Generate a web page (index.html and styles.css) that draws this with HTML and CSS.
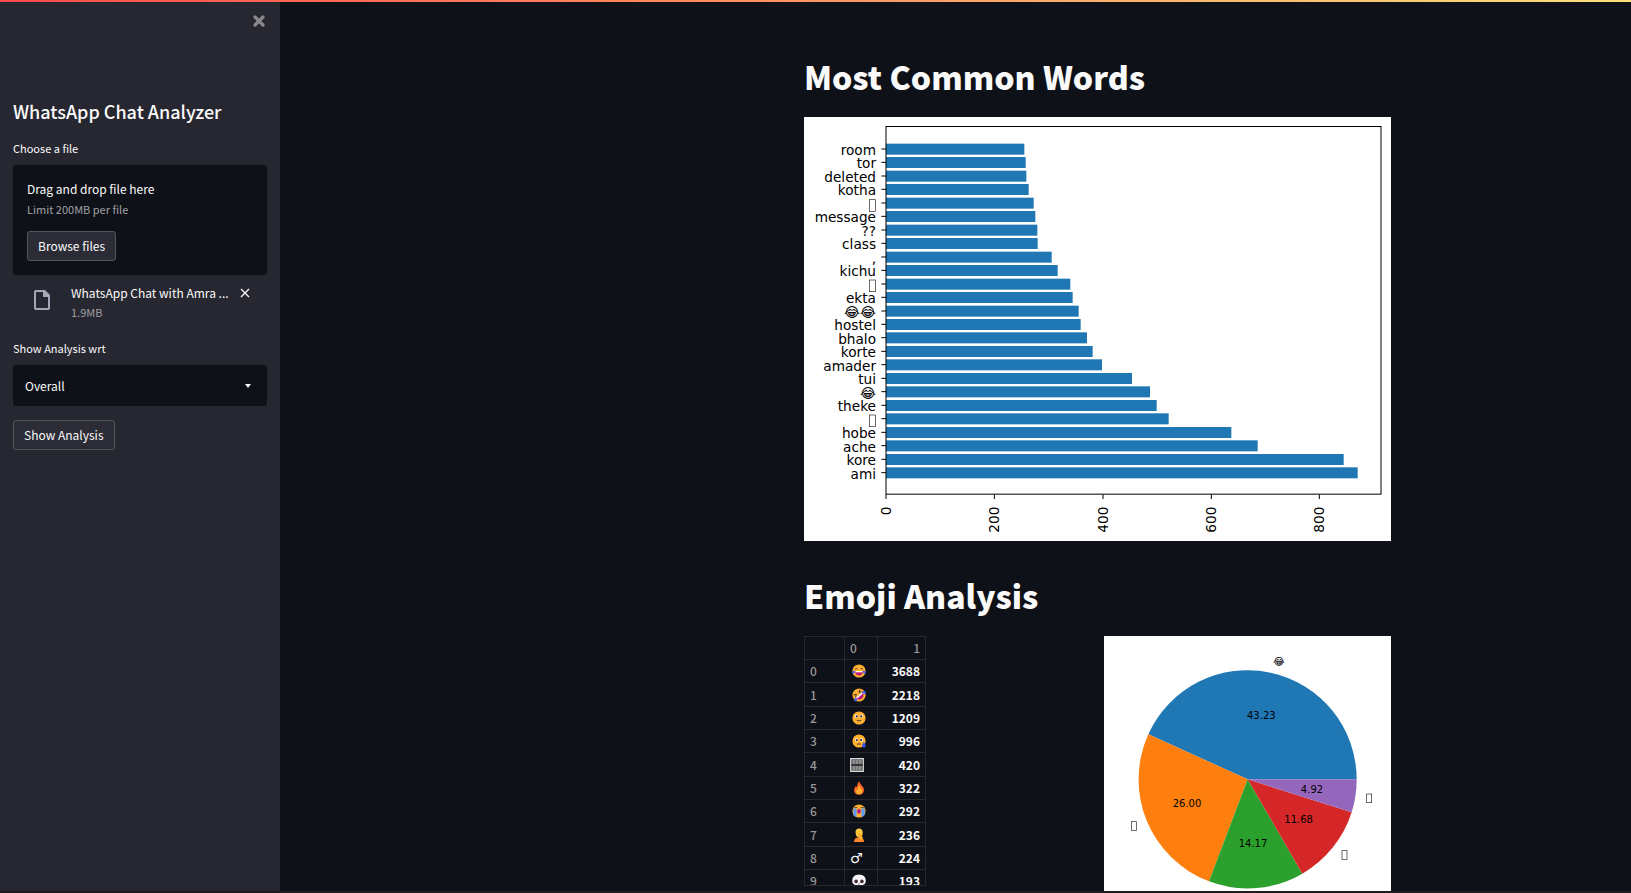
FILE: index.html
```html
<!DOCTYPE html>
<html lang="en">
<head>
<meta charset="utf-8">
<title>WhatsApp Chat Analyzer</title>
<link rel="stylesheet" href="styles.css">
</head>
<body>
<div class="app">
  <div class="decoration"></div>
  <div class="body">
    <aside class="sidebar">
      <div class="sidebar-top">
        <button class="icon-button" type="button" aria-label="Close sidebar">
          <svg width="12" height="12" viewBox="0 0 12 12"><path d="M2 2L10 10M10 2L2 10" stroke="#88888d" stroke-width="3.2" stroke-linecap="round"/></svg>
        </button>
      </div>
      <h1 class="sidebar-title">WhatsApp Chat Analyzer</h1>

      <label class="label" for="browse">Choose a file</label>
      <div class="dropzone">
        <div class="drop-title">Drag and drop file here</div>
        <div class="drop-limit">Limit 200MB per file</div>
        <button class="button" id="browse" type="button">Browse files</button>
      </div>
      <div class="file">
        <svg class="file-icon" width="16" height="20" viewBox="0 0 16 20"><path d="M1 2Q1 1 2 1H10L15 6V18Q15 19 14 19H2Q1 19 1 18Z" fill="none" stroke="#a3a8b8" stroke-width="2"/><path d="M9 0H11L16 5V7H9Z" fill="#a3a8b8"/></svg>
        <div class="file-text">
          <div class="file-name">WhatsApp Chat with Amra ...</div>
          <div class="file-size">1.9MB</div>
        </div>
        <button class="icon-button" type="button" aria-label="Remove file">
          <svg width="10" height="10" viewBox="0 0 10 10"><path d="M1 1L9 9M9 1L1 9" stroke="#fafafa" stroke-width="1.3"/></svg>
        </button>
      </div>

      <label class="label" for="user">Show Analysis wrt</label>
      <div class="select-box">
        <select class="select" id="user"><option>Overall</option></select>
        <svg class="caret" width="6" height="4" viewBox="0 0 6 4"><path d="M0 0H6L3 4Z" fill="#fafafa"/></svg>
      </div>
      <button class="button" type="button">Show Analysis</button>
    </aside>

    <main class="main">
      <div class="content">
        <h2 class="heading">Most Common Words</h2>
        <svg class="chart" viewBox="0 0 1761 1272" role="img" aria-label="Most common words">
          <rect width="1761" height="1272" fill="#fff"/>
          <g fill="#1f77b4">
            <rect x="246" y="80" width="415" height="33"/>
            <rect x="246" y="120" width="419" height="33"/>
            <rect x="246" y="161" width="421" height="33"/>
            <rect x="246" y="201" width="428" height="33"/>
            <rect x="246" y="242" width="443" height="33"/>
            <rect x="246" y="282" width="448" height="33"/>
            <rect x="246" y="323" width="454" height="33"/>
            <rect x="246" y="363" width="455" height="33"/>
            <rect x="246" y="404" width="497" height="33"/>
            <rect x="246" y="444" width="515" height="33"/>
            <rect x="246" y="485" width="553" height="33"/>
            <rect x="246" y="525" width="560" height="33"/>
            <rect x="246" y="566" width="578" height="33"/>
            <rect x="246" y="606" width="584" height="33"/>
            <rect x="246" y="646" width="603" height="33"/>
            <rect x="246" y="687" width="620" height="33"/>
            <rect x="246" y="727" width="648" height="33"/>
            <rect x="246" y="768" width="738" height="33"/>
            <rect x="246" y="808" width="792" height="33"/>
            <rect x="246" y="849" width="812" height="33"/>
            <rect x="246" y="889" width="848" height="33"/>
            <rect x="246" y="930" width="1036" height="33"/>
            <rect x="246" y="970" width="1115" height="33"/>
            <rect x="246" y="1011" width="1373" height="33"/>
            <rect x="246" y="1051" width="1415" height="33"/>
          </g>
          <g fill="none" stroke="#000" stroke-width="3">
            <rect x="246" y="28.5" width="1485" height="1103"/>
            <path d="M232 96h14M232 136h14M232 177h14M232 217h14M232 258h14M232 298h14M232 339h14M232 379h14M232 420h14M232 460h14M232 501h14M232 541h14M232 582h14M232 622h14M232 662h14M232 703h14M232 743h14M232 784h14M232 824h14M232 865h14M232 905h14M232 946h14M232 986h14M232 1027h14M232 1067h14"/>
            <path d="M246 1132v14M571 1132v14M897 1132v14M1222 1132v14M1546 1132v14"/>
          </g>
          <g class="tick" text-anchor="end">
            <text x="216" y="113">room</text>
            <text x="216" y="153">tor</text>
            <text x="216" y="194">deleted</text>
            <text x="216" y="234">kotha</text>
            <text x="216" y="315">message</text>
            <text x="216" y="356">??</text>
            <text x="216" y="396">class</text>
            <text x="216" y="437">,</text>
            <text x="216" y="477">kichu</text>
            <text x="216" y="558">ekta</text>
            <text x="216" y="599">&#x1F602;&#xFE0E;&#x1F602;&#xFE0E;</text>
            <text x="216" y="639">hostel</text>
            <text x="216" y="680">bhalo</text>
            <text x="216" y="720">korte</text>
            <text x="216" y="761">amader</text>
            <text x="216" y="801">tui</text>
            <text x="216" y="842">&#x1F602;&#xFE0E;</text>
            <text x="216" y="882">theke</text>
            <text x="216" y="963">hobe</text>
            <text x="216" y="1004">ache</text>
            <text x="216" y="1044">kore</text>
            <text x="216" y="1085">ami</text>
            <text transform="translate(260 1169) rotate(-90)">0</text>
            <text transform="translate(585 1169) rotate(-90)">200</text>
            <text transform="translate(911 1169) rotate(-90)">400</text>
            <text transform="translate(1236 1169) rotate(-90)">600</text>
            <text transform="translate(1560 1169) rotate(-90)">800</text>
          </g>
          <g fill="none" stroke="#222" stroke-width="2">
            <rect x="196" y="248" width="18" height="35"/>
            <rect x="196" y="489" width="18" height="35"/>
            <rect x="196" y="894" width="18" height="35"/>
          </g>
        </svg>

        <h2 class="heading">Emoji Analysis</h2>
        <div class="columns">
          <div class="frame">
            <table class="table">
              <thead>
                <tr><th class="idx"></th><th class="emo">0</th><th class="num">1</th></tr>
              </thead>
              <tbody>
                <tr><th>0</th><td class="pic"><svg class="emoji" viewBox="0 0 14 14"><circle cx="7" cy="7" r="6.6" fill="#ffb02e"/><path d="M3 5.2Q4.2 3.6 5.4 5M8.6 5Q9.8 3.6 11 5.2" fill="none" stroke="#402a32" stroke-width=".9"/><path d="M3 7H11Q10.6 11.5 7 11.5T3 7Z" fill="#bb1d80"/><path d="M3.5 7H10.5V8.3H3.5Z" fill="#fff"/><path d="M0 8.5Q.5 6.8 3 6.5Q3.2 9.3 1.5 9.5Q0 9.6 0 8.5ZM14 8.5Q13.5 6.8 11 6.5Q10.8 9.3 12.5 9.5Q14 9.6 14 8.5Z" fill="#3f5fff"/></svg></td><td>3688</td></tr>
                <tr><th>1</th><td class="pic"><svg class="emoji" viewBox="0 0 14 14"><g transform="rotate(-40 7 7)"><circle cx="7" cy="7" r="6.6" fill="#ffb02e"/><path d="M3 3.5L5.3 5L3 6M11 3.5L8.7 5L11 6" fill="none" stroke="#402a32" stroke-width=".9"/><path d="M2.8 7H11.2Q10.8 11.7 7 11.7T2.8 7Z" fill="#bb1d80"/><path d="M3.3 7H10.7V8.4H3.3Z" fill="#fff"/><path d="M-.2 8Q1 6.5 3 6.5Q3.2 10 1.3 10Q-.4 9.6 -.2 8ZM14.2 8Q13 6.5 11 6.5Q10.8 10 12.7 10Q14.4 9.6 14.2 8Z" fill="#3f5fff"/></g></svg></td><td>2218</td></tr>
                <tr><th>2</th><td class="pic"><svg class="emoji" viewBox="0 0 14 14"><circle cx="7" cy="7" r="6.6" fill="#ffb02e"/><circle cx="4.6" cy="5.3" r="1.7" fill="#fff"/><circle cx="9.4" cy="5.3" r="1.7" fill="#fff"/><circle cx="4.8" cy="5.4" r="1.1" fill="#402a32"/><circle cx="9.2" cy="5.4" r="1.1" fill="#402a32"/><path d="M4.8 9.3Q7 10.7 9.2 9.3" fill="none" stroke="#402a32" stroke-width=".9"/></svg></td><td>1209</td></tr>
                <tr><th>3</th><td class="pic"><svg class="emoji" viewBox="0 0 14 14"><circle cx="7" cy="7" r="6.6" fill="#ffb02e"/><circle cx="4.6" cy="6" r="1.7" fill="#fff"/><circle cx="9.4" cy="6" r="1.7" fill="#fff"/><circle cx="4.8" cy="6.1" r="1.1" fill="#402a32"/><circle cx="9.2" cy="6.1" r="1.1" fill="#402a32"/><path d="M5 10.3Q7 9.3 9 10.3" fill="none" stroke="#402a32" stroke-width=".9"/><path d="M11.8 8Q14 11 13.6 12.2Q13 13.8 11.5 13.5Q10 13 10.2 11.6Q10.4 10.5 11.8 8Z" fill="#2b50ff"/></svg></td><td>996</td></tr>
                <tr><th>4</th><td><svg class="emoji" viewBox="0 0 14 14"><path d="M.7 .7H13.3V13.3H.7Z" fill="#55575b" stroke="#dcdcdc" stroke-width="1.2"/><path d="M2.5 3H11.5M2.5 5H11.5M2.5 9H11.5M2.5 11H11.5" stroke="#a0a0a0" stroke-width="1.5" stroke-dasharray="2.6 .6"/><path d="M1 7H13" stroke="#111" stroke-width="1"/></svg></td><td>420</td></tr>
                <tr><th>5</th><td class="pic"><svg class="emoji" viewBox="0 0 14 14"><path d="M7.3 .2Q7.5 2.5 9.8 4.5Q12.3 7 12 9.5Q11.4 13.7 7 13.8Q2.4 13.6 2 9.5Q2 6.8 4 5Q4.3 6 5 6.2Q4.8 2.5 7.3 .2Z" fill="#ff6723"/><path d="M7.6 4.5Q7.9 6.3 9.2 7.7Q10.5 9.2 10 11Q9.2 13.3 7 13.3Q4.5 13.2 4.1 11Q3.9 9.3 5 8.5Q5.3 9.2 5.9 9Q5.500 6.500 7.600 4.500Z" fill="#ffb02e"/></svg></td><td>322</td></tr>
                <tr><th>6</th><td class="pic"><svg class="emoji" viewBox="0 0 14 14"><circle cx="7" cy="7" r="6.6" fill="#ffb02e"/><path d="M2 3.8L5.3 3.3M8.7 3.3L12 3.8" stroke="#402a32" stroke-width=".8"/><path d="M1.3 4.6H4.6V13.2Q2.5 12.5 1.3 11ZM9.4 4.6H12.7V11Q11.5 12.5 9.4 13.2Z" fill="#5f9bf5"/><ellipse cx="7" cy="7.3" rx="1.9" ry="2.5" fill="#bb1d80"/></svg></td><td>292</td></tr>
                <tr><th>7</th><td class="pic"><svg class="emoji" viewBox="0 0 14 14"><path d="M2 14Q2 9.8 6 9.5H8.5Q12 9.8 12 14Z" fill="#ff822d"/><path d="M3.5 4Q3.5 .4 7.2 .4Q10.8 .6 10.7 4.5Q10.7 9.5 7.3 9.7Q3.7 9.5 3.5 4Z" fill="#ffc83d"/><path d="M6.3 4.5Q8 4.5 9 6.5L11 10L9 12.5L6 8Z" fill="#ffb02e"/></svg></td><td>236</td></tr>
                <tr><th>8</th><td class="sign">&#x2642;&#xFE0E;</td><td>224</td></tr>
                <tr><th>9</th><td class="pic"><svg class="emoji" viewBox="0 0 14 14"><path d="M.2 6.5Q.5 .8 7 .6Q13.5 .8 13.8 6.5Q13.8 10 11.5 10.6L11 13.4H3L2.5 10.6Q.2 10 .2 6.5Z" fill="#f6f4f8"/><circle cx="4.1" cy="7.4" r="1.8" fill="#402a32"/><circle cx="9.9" cy="7.4" r="1.8" fill="#402a32"/><path d="M7 9L7.8 10.3H6.2Z" fill="#402a32"/></svg></td><td>193</td></tr>
              </tbody>
            </table>
          </div>
          <svg class="pie" viewBox="0 0 861 846" role="img" aria-label="Emoji share">
            <rect width="861" height="846" fill="#fff"/>
            <path fill="#1f77b4" d="M431 430L758 430A327 327 0 0 0 133 295Z"/>
            <path fill="#ff7f0e" d="M431 430L133 295A327 327 0 0 0 315 736Z"/>
            <path fill="#2ca02c" d="M431 430L315 736A327 327 0 0 0 595 713Z"/>
            <path fill="#d62728" d="M431 430L595 713A327 327 0 0 0 743 529Z"/>
            <path fill="#9467bd" d="M431 430L743 529A327 327 0 0 0 758 430Z"/>
            <g class="share" text-anchor="middle">
              <text x="472" y="248">43.23</text>
              <text x="249" y="514">26.00</text>
              <text x="447" y="634">14.17</text>
              <text x="584" y="562">11.68</text>
              <text x="624" y="470">4.92</text>
              <text x="525" y="87">&#x1F602;&#xFE0E;</text>
            </g>
            <g fill="none" stroke="#222" stroke-width="2">
              <rect x="82" y="557" width="15" height="26"/>
              <rect x="714" y="644" width="15" height="26"/>
              <rect x="788" y="474" width="15" height="26"/>
            </g>
          </svg>
        </div>
      </div>
    </main>
  </div>
  <div class="bottom-edge"></div>
</div>
</body>
</html>
```
FILE: styles.css
```css
* { box-sizing: border-box; }

body {
  margin: 0;
  background: #0e1117;
  color: #fafafa;
  font-family: "Noto Sans CJK SC", "Open Sans", sans-serif;
  font-size: 12px;
  line-height: 20px;
}

button, select { font: inherit; color: inherit; }

.app {
  display: grid;
  grid-template-rows: 2px minmax(0, 1fr) 2px;
  height: 100vh;
  overflow: hidden;
}

.decoration { background: linear-gradient(90deg, #ff4b4b, #ffe07a); }
.bottom-edge { background: #1f1c1e; }
.body { display: flex; min-height: 0; }

.sidebar {
  flex: none;
  width: 280px;
  padding: 0 13px;
  background: #262730;
}

.sidebar-top {
  display: flex;
  justify-content: flex-end;
  height: 94px;
  padding-top: 13px;
  padding-right: 2px;
}

.icon-button {
  display: flex;
  align-self: flex-start;
  padding: 0;
  border: 0;
  background: none;
}

.sidebar-title {
  margin: 0 0 15px;
  font-size: 18px;
  font-weight: 500;
  line-height: 30px;
}

.label {
  display: block;
  height: 24px;
  font-size: 11px;
  line-height: 14px;
}

.dropzone {
  padding: 14px;
  border-radius: 3px;
  background: #0e1117;
}

.drop-limit {
  margin-bottom: 12px;
  color: #a0a1a5;
  font-size: 11px;
}

.button {
  display: inline-block;
  height: 30px;
  padding: 0 10px;
  border: 1px solid #53545c;
  border-radius: 3px;
  background: #2b2c36;
  line-height: 20px;
}

.file {
  display: flex;
  align-items: flex-start;
  height: 66px;
  padding: 8px 17px 0 21px;
}

.file-icon { flex: none; margin-top: 7px; }
.file-text { flex: 1; min-width: 0; margin-left: 21px; }
.file-name { white-space: nowrap; }
.file-size { color: #a0a1a5; font-size: 11px; line-height: 18px; }
.file .icon-button { margin-top: 5px; }

.select-box { position: relative; margin-bottom: 14px; }

.select {
  display: block;
  width: 100%;
  height: 41px;
  padding: 0 12px;
  border: 0;
  border-radius: 3px;
  background: #0e1117;
  appearance: none;
}

.caret { position: absolute; top: 19px; right: 16px; }

.main {
  flex: 1;
  min-width: 0;
  padding: 47px 0 0 284px;
  overflow: hidden;
}

.content { max-width: 587px; margin: 0 auto; }

.heading {
  margin: 0 0 14px;
  font-size: 32px;
  font-weight: 900;
  line-height: 54px;
}

.chart, .pie { display: block; width: 100%; height: auto; }
.chart { margin-bottom: 27px; }

.tick, .share { font-family: "DejaVu Sans", sans-serif; }
.tick { font-size: 41px; }
.share { font-size: 30px; }

.columns {
  display: grid;
  grid-template-columns: 1fr 1fr;
  align-items: start;
  gap: 13px;
}

.frame {
  width: 122px;
  height: 250px;
  overflow: hidden;
  border-bottom: 1px solid #29292d;
}

.table {
  width: 122px;
  border-collapse: collapse;
  table-layout: fixed;
  line-height: 16px;
}

.table tr { height: 23px; }
.table tbody tr:nth-child(3n+2) { height: 24px; }

.table th, .table td {
  padding: 0 5px;
  border: 1px solid #29292d;
  text-align: left;
}

.table th { color: #97989b; font-weight: 500; }
.table td { font-weight: 700; }
.table td:last-child, .table .num { text-align: right; }
.table .idx { width: 40px; }
.table .emo { width: 33px; }
.table .pic { padding-left: 7px; }
.table .sign { font-family: "DejaVu Sans", sans-serif; font-weight: 400; font-size: 14px; }
.emoji { display: block; width: 14px; height: 14px; }
```
